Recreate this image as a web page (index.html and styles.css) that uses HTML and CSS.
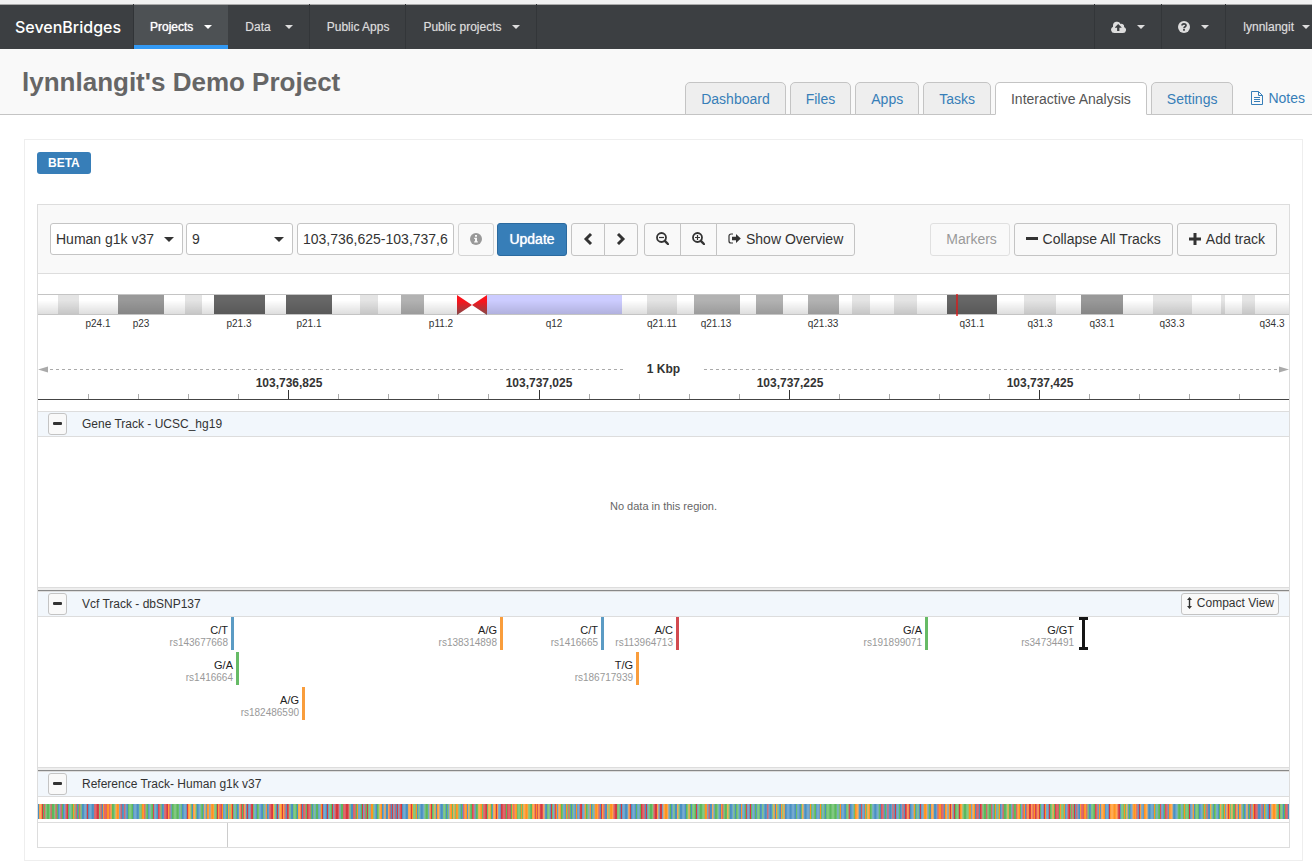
FILE: index.html
```html
<!DOCTYPE html>
<html lang="en">
<head>
<meta charset="utf-8">
<title>lynnlangit's Demo Project</title>
<link rel="stylesheet" href="styles.css">
</head>
<body>
<nav class="topbar">
  <a class="logo" href="#">SevenBridges</a>
  <a class="nav-item active" href="#">Projects<span class="caret"></span></a>
  <a class="nav-item data" href="#">Data<span class="caret"></span></a>
  <a class="nav-item" href="#">Public Apps</a>
  <a class="nav-item" href="#">Public projects<span class="caret"></span></a>
  <div class="nav-right">
    <a class="nav-item icon-item" href="#" aria-label="Upload">
      <svg width="15" height="12" viewBox="0 0 15 12"><path fill="currentColor" fill-rule="evenodd" d="M3.4 12A3.3 3.3 0 0 1 2 5.700V5a4 4 0 0 1 7.600-2A2.500 2.500 0 0 1 13 6a3.100 3.100 0 0 1-1 6zM7.200 3 4 6.300v.5h2.100V10h2.300V6.800h2.100v-.5z"/></svg>
      <span class="caret"></span></a>
    <a class="nav-item icon-item" href="#" aria-label="Help">
      <svg width="12" height="12" viewBox="0 0 12 12"><circle cx="6" cy="6" r="6" fill="currentColor"/><path d="M4 4.600C4 2.300 8 2.300 8 4.400 8 5.800 6 5.600 6 7.300" fill="none" stroke="#3c3f42" stroke-width="1.700"/><path fill="#3c3f42" d="M5.100 8h1.800v1.700H5.100z"/></svg>
      <span class="caret"></span></a>
    <a class="nav-item user" href="#">lynnlangit<span class="caret"></span></a>
  </div>
</nav>

<header class="project">
  <h1>lynnlangit's Demo Project</h1>
  <div class="tabs">
    <a class="tab" href="#">Dashboard</a>
    <a class="tab" href="#">Files</a>
    <a class="tab" href="#">Apps</a>
    <a class="tab" href="#">Tasks</a>
    <a class="tab current" href="#">Interactive Analysis</a>
    <a class="tab" href="#">Settings</a>
    <a class="notes" href="#"><svg width="12" height="14" viewBox="0 0 12 14" fill="none" stroke="currentColor"><path d="M.5.5h7l4 4v9H.5zM7.500.500v4h4M3 6.500h6M3 8.500h6M3 10.500h6"/></svg>Notes</a>
  </div>
</header>

<main class="page">
  <span class="badge">BETA</span>
  <section class="browser">
    <form class="toolbar">
      <span class="select genome"><select aria-label="Genome"><option>Human g1k v37</option></select></span>
      <span class="select chrom"><select aria-label="Chromosome"><option>9</option></select></span>
      <input class="range" type="text" aria-label="Region" value="103,736,625-103,737,625">
      <button class="btn info" type="button" aria-label="Info"><svg width="12" height="12" viewBox="0 0 12 12"><circle cx="6" cy="6" r="6" fill="#999"/><path fill="#f9f9f9" d="M5 2h2v1.700H5zM4.200 4.700H7v3.500h.8v1.300H4.200V8.200H5V6h-.8z"/></svg></button>
      <button class="btn primary" type="button">Update</button>
      <span class="group steps">
        <button class="btn" type="button" aria-label="Previous"><svg width="10" height="12" viewBox="0 0 10 12"><path d="M8 1 3 6l5 5" fill="none" stroke="#333" stroke-width="2.900"/></svg></button>
        <button class="btn" type="button" aria-label="Next"><svg width="10" height="12" viewBox="0 0 10 12"><path d="m2 1 5 5-5 5" fill="none" stroke="#333" stroke-width="2.900"/></svg></button>
      </span>
      <span class="group zoom">
        <button class="btn" type="button" aria-label="Zoom out"><svg width="13" height="13" viewBox="0 0 13 13" fill="none" stroke="#333"><circle cx="5.500" cy="5.500" r="4.500" stroke-width="1.800"/><path d="m8.800 8.800 3.200 3.200" stroke-width="2.400" stroke-linecap="round"/><path d="M3 5.500h5" stroke-width="1.200"/></svg></button>
        <button class="btn" type="button" aria-label="Zoom in"><svg width="13" height="13" viewBox="0 0 13 13" fill="none" stroke="#333"><circle cx="5.500" cy="5.500" r="4.500" stroke-width="1.800"/><path d="m8.800 8.800 3.200 3.200" stroke-width="2.400" stroke-linecap="round"/><path d="M3 5.500h5M5.500 3v5" stroke-width="1.200"/></svg></button>
        <button class="btn overview" type="button"><svg width="13" height="11" viewBox="0 0 13 11"><path d="M5 1H3a2 2 0 0 0-2 2v5a2 2 0 0 0 2 2h2" fill="none" stroke="#333" stroke-width="1.200"/><path fill="#333" d="M4 3.700h4V1l4.800 4.500L8 10V7.300H4z"/></svg>Show Overview</button>
      </span>
      <span class="actions">
        <button class="btn markers" type="button" disabled>Markers</button>
        <button class="btn" type="button"><svg width="12" height="12" viewBox="0 0 12 12"><path fill="#333" d="M0 4h12v3H0z"/></svg>Collapse All Tracks</button>
        <button class="btn" type="button"><svg width="12" height="12" viewBox="0 0 12 12"><path fill="#333" d="M4.500 0h3v4.500H12v3H7.500V12h-3V7.500H0v-3h4.500z"/></svg>Add track</button>
      </span>
    </form>

    <svg class="ideogram" id="ideogram" role="img" aria-label="Chromosome 9 bands">
      <defs>
        <linearGradient id="shade" x1="0" y1="0" x2="0" y2="1">
          <stop offset="0.300" stop-color="#000" stop-opacity="0"/>
          <stop offset="1" stop-color="#000" stop-opacity="0.140"/>
        </linearGradient>
        <linearGradient id="centromere" x1="0" y1="0" x2="0" y2="1">
          <stop offset="0.300" stop-color="#f9141c"/>
          <stop offset="1" stop-color="#804a4a"/>
        </linearGradient>
      </defs>
    </svg>
    <svg class="ruler" id="ruler" role="img" aria-label="Position ruler"></svg>

    <article class="track">
      <div class="track-head"><button class="toggle" type="button" aria-label="Collapse"></button><h2>Gene Track - UCSC_hg19</h2></div>
      <div class="track-body empty">No data in this region.</div>
      <div class="resize"></div>
    </article>
    <article class="track">
      <div class="track-head"><button class="toggle" type="button" aria-label="Collapse"></button><h2>Vcf Track - dbSNP137</h2>
        <button class="compact" type="button"><svg width="5" height="12" viewBox="0 0 5 12"><path d="M2.500 2v8" stroke="#333" stroke-width="1.400"/><path fill="#333" d="M0 3 2.500 0 5 3zM0 9l2.500 3L5 9z"/></svg>Compact View</button></div>
      <div class="track-body" id="variants"></div>
      <div class="resize"></div>
    </article>
    <article class="track">
      <div class="track-head"><button class="toggle" type="button" aria-label="Collapse"></button><h2>Reference Track- Human g1k v37</h2></div>
      <svg class="sequence" id="sequence" viewBox="0 0 1000 1" preserveAspectRatio="none"></svg>
    </article>
    <footer class="status"><div class="status-cell"></div></footer>
  </section>
</main>
<script src="app.js"></script>
</body>
</html>
```

FILE: styles.css
```css
* { box-sizing: border-box; }
body {
  margin: 0;
  background: #fff;
  color: #333;
  font: 14px/20px "Liberation Sans", Arial, sans-serif;
}
a { text-decoration: none; }
svg { display: block; flex: none; }
button, input, select { font: inherit; color: inherit; }

.topbar {
  display: flex;
  height: 49px;
  border-top: 4px solid #f1f1f1;
  background: #3c3f42;
  box-shadow: inset 0 1px #aaa;
  overflow: hidden;
}
.logo {
  display: flex;
  align-items: center;
  width: 134px;
  padding-left: 15px;
  border-right: 1px solid #313437;
  color: #fff;
  font: 500 16px/20px Inter, "Open Sans", sans-serif;
}
.nav-item {
  display: flex;
  align-items: center;
  padding: 1px 16px 0 17px;
  border-right: 1px solid #333639;
  color: #ddd;
  font-size: 12px;
  text-shadow: 0 0 1px #888;
}
.nav-item.active {
  margin-top: 1px;
  padding: 3px 16px 0;
  border-right: 0;
  border-bottom: 4px solid #3399f3;
  background: #4d5154;
  color: #fff;
  text-shadow: 0 0 1px #fff;
}
.caret {
  margin-left: 11px;
  border: 4px solid transparent;
  border-top-color: currentColor;
  border-bottom: 0;
}
.data .caret { margin-left: 14px; }
.nav-right { display: flex; margin-left: auto; border-left: 1px solid #333639; }
.nav-item.icon-item { padding-left: 16px; }
.nav-item.user { padding-right: 2px; border-right: 0; }
.user .caret { margin-left: 8px; }

.project {
  display: flex;
  justify-content: space-between;
  align-items: flex-end;
  height: 66px;
  padding: 0 7px 0 22px;
  border-bottom: 1px solid #c4c4c4;
  background: #f9f9f9;
}
h1 { margin: 0; padding-bottom: 17px; color: #666; font-size: 26px; line-height: 30px; }
.tabs { display: flex; gap: 4px; margin-bottom: -1px; }
.tab {
  height: 33px;
  padding: 6px 15px;
  border: 1px solid #c4c4c4;
  border-radius: 5px 5px 0 0;
  background: #eee;
  color: #377eb8;
}
.tab.current { border-bottom-color: #fff; background: #fff; color: #555; }
.notes { display: flex; gap: 5px; align-items: center; height: 32px; padding-left: 14px; color: #377eb8; }

.page {
  margin: 24px 9px 4px 24px;
  padding: 12px;
  border: 1px solid #eee;
}
.badge {
  display: block;
  width: fit-content;
  padding: 0 11px;
  border-radius: 3px;
  background: #377eb8;
  color: #fff;
  font-size: 12px;
  font-weight: bold;
  line-height: 22px;
}
.browser { margin-top: 30px; border: 1px solid #ddd; }
.toolbar {
  display: flex;
  align-items: flex-start;
  height: 69px;
  padding: 18px 12px 0;
  border-bottom: 1px solid #ddd;
  background: #f9f9f9;
}
.select { position: relative; height: 32px; }
.select::after {
  content: "";
  position: absolute;
  top: 14px;
  right: 9px;
  border: 5px solid transparent;
  border-top-color: #333;
  border-bottom: 0;
  pointer-events: none;
}
select, .range {
  width: 100%;
  height: 32px;
  padding: 0 5px;
  border: 1px solid #c4c4c4;
  border-radius: 3px;
  background: #fff;
  appearance: none;
}
.genome { width: 133px; margin-right: 3px; }
.chrom { width: 107px; margin-right: 4px; }
.range { width: 157px; margin-right: 4px; }
.btn {
  display: flex;
  align-items: center;
  justify-content: center;
  gap: 5px;
  height: 33px;
  padding: 0 11px 2px;
  border: 1px solid #c4c4c4;
  border-radius: 3px;
  background: #f9f9f9;
  white-space: nowrap;
}
.info { width: 36px; margin-right: 3px; border-color: #d4d4d4; }
.primary {
  width: 70px;
  margin-right: 4px;
  border-color: #2b6a9f;
  background: #377eb8;
  color: #fff;
  text-shadow: 0 0 1px #fff;
}
.group { display: flex; margin-right: 6px; }
.group .btn + .btn { margin-left: -1px; }
.group .btn:not(:first-child) { border-top-left-radius: 0; border-bottom-left-radius: 0; }
.group .btn:not(:last-child) { border-top-right-radius: 0; border-bottom-right-radius: 0; }
.steps .btn { width: 34px; }
.zoom .btn { width: 37px; }
.zoom .overview { width: auto; }
.actions { display: flex; gap: 4px; margin-left: auto; }
.markers { width: 80px; padding-left: 15px; border-color: #e0e0e0; color: #999; }

.ideogram { width: 100%; height: 38px; margin-top: 20px; overflow: visible; font-size: 10px; }
.ruler { width: 100%; height: 40px; margin: 30px 0 9px; font-size: 12px; font-weight: bold; }
.ideogram text, .ruler text { text-anchor: middle; fill: #333; }

.track-head {
  display: flex;
  align-items: center;
  height: 26px;
  padding: 0 10px;
  border: solid #ddd;
  border-width: 1px 0;
  background: #f2f7fc;
}
.toggle {
  display: grid;
  place-items: center;
  width: 19px;
  height: 22px;
  padding: 0 0 2px;
  border: 1px solid #c4c4c4;
  border-radius: 3px;
  background: #f9f9f9;
}
.toggle::before { content: ""; width: 9px; height: 3px; border-radius: 1px; background: #333; }
h2 { margin: 0 auto 0 15px; font-size: 12px; font-weight: normal; }
.compact {
  display: flex;
  align-items: center;
  gap: 5px;
  height: 22px;
  padding: 0 4px 2px 5px;
  border: 1px solid #c4c4c4;
  border-radius: 3px;
  background: #f9f9f9;
  font-size: 12px;
}
.track-body { height: 150px; }
.empty { display: grid; place-items: center; padding-bottom: 12px; color: #666; font-size: 11px; }
.resize { height: 4px; border-top: 1px solid #ddd; border-bottom: 1px solid #888; background: #eee; }

.variant-row { position: relative; height: 35px; }
.variant {
  position: absolute;
  top: 0;
  display: flex;
  flex-direction: column;
  height: 33px;
  padding: 7px 3px 0 0;
  border-right: 3px solid;
  text-align: right;
}
.variant b { color: #222; font-size: 11px; font-weight: normal; line-height: 13px; }
.variant i { color: #999; font-size: 10px; font-style: normal; line-height: 12px; }
.snp-blue { border-color: #5b9bc4; }
.snp-green { border-color: #66bb66; }
.snp-orange { border-color: #f99d3c; }
.snp-red { border-color: #d24a50; }
.indel { border-right: 0; padding-right: 14px; }
.indel svg { position: absolute; top: 0; right: 0; }

.sequence { width: 100%; height: 15px; margin: 7px 0 3px; }
.status { display: flex; height: 25px; border-top: 1px solid #ddd; }
.status-cell { width: 190px; border-right: 1px solid #ccc; }
```

FILE: app.js
```js
const NS = "http://www.w3.org/2000/svg";
const SPAN = 1251;
const pct = x => (x / SPAN * 100).toFixed(3) + "%";

function add(parent, name, attrs, text) {
  const el = document.createElementNS(NS, name);
  for (const key in attrs) el.setAttribute(key, attrs[key]);
  if (text) el.textContent = text;
  parent.appendChild(el);
  return el;
}

/* Chromosome bands: start, end, stain colour */
const bands = [
  [20, 41, "#e4e4e4"], [80, 126, "#999"], [147, 164, "#e4e4e4"], [176, 227, "#666"],
  [248, 294, "#666"], [322, 340, "#e4e4e4"], [363, 386, "#b2b2b2"], [449, 584, "#ccccff"],
  [609, 639, "#e4e4e4"], [656, 702, "#b2b2b2"], [718, 745, "#b2b2b2"], [770, 801, "#b2b2b2"],
  [814, 832, "#e4e4e4"], [856, 879, "#e4e4e4"], [909, 959, "#666"], [986, 1018, "#e4e4e4"],
  [1043, 1085, "#999"], [1115, 1154, "#e4e4e4"], [1183, 1187, "#e4e4e4"], [1204, 1217, "#e4e4e4"]
];
const bandLabels = [
  [60, "p24.1"], [103, "p23"], [201, "p21.3"], [271, "p21.1"], [403, "p11.2"], [516, "q12"],
  [624, "q21.11"], [678, "q21.13"], [785, "q21.33"], [934, "q31.1"], [1002, "q31.3"],
  [1064, "q33.1"], [1134, "q33.3"], [1234, "q34.3"]
];
const ideogram = document.getElementById("ideogram");
bands.forEach(([a, b, fill]) =>
  add(ideogram, "rect", { x: pct(a), y: 0, width: pct(b - a), height: 21, fill }));
add(ideogram, "rect", { x: 0, y: 0, width: "100%", height: 21, fill: "url(#shade)" });
add(ideogram, "rect", { x: 0, y: 0, width: "100%", height: 1, fill: "#c4c4c4" });
add(ideogram, "rect", { x: 0, y: 20, width: "100%", height: 1, fill: "#c4c4c4" });
const cen = add(ideogram, "svg", { x: pct(419), y: 0, width: pct(30), height: 21, viewBox: "0 0 30 21", preserveAspectRatio: "none" });
add(cen, "path", { d: "M0 1h30v19H0z", fill: "#fff" });
add(cen, "path", { d: "M0 1 15 11 30 1v20L15 11 0 21z", fill: "url(#centromere)" });
add(ideogram, "rect", { x: pct(918), y: 0, width: 2, height: 22, fill: "#e01818", "fill-opacity": 0.7 });
bandLabels.forEach(([x, name]) => add(ideogram, "text", { x: pct(x), y: 33 }, name));

/* Ruler */
const ruler = document.getElementById("ruler");
const dash = { stroke: "#aaa", "stroke-dasharray": "3 3" };
add(ruler, "line", { x1: 12, x2: pct(585), y1: 7.5, y2: 7.5, ...dash });
add(ruler, "line", { x1: pct(666), x2: pct(1240), y1: 7.5, y2: 7.5, ...dash });
add(ruler, "path", { d: "M0 7.5 10 4.5v6z", fill: "#aaa" });
const tip = add(ruler, "svg", { x: "100%", y: 0, overflow: "visible", width: 1, height: 16 });
add(tip, "path", { d: "M0 7.5-10 4.5v6z", fill: "#aaa" });
add(ruler, "text", { x: "50%", y: 11 }, "1 Kbp");
for (let k = 1; k < 25; k++) {
  const major = k % 5 === 0;
  add(ruler, "rect", { x: pct(Math.round(k * 50.05)), y: major ? 28 : 32, width: 1, height: major ? 9 : 5,
    fill: major ? "#333" : "#aaa", "shape-rendering": "crispEdges" });
}
add(ruler, "rect", { x: 0, y: 37, width: "100%", height: 1, fill: "#444" });
[[251, "103,736,825"], [501, "103,737,025"], [752, "103,737,225"], [1002, "103,737,425"]]
  .forEach(([x, label]) => add(ruler, "text", { x: pct(x), y: 25 }, label));

/* Variants: right edge of the bar, colour, alleles, id */
const variants = [
  [[196, "snp-blue", "C/T", "rs143677668"], [465, "snp-orange", "A/G", "rs138314898"],
   [566, "snp-blue", "C/T", "rs1416665"], [641, "snp-red", "A/C", "rs113964713"],
   [890, "snp-green", "G/A", "rs191899071"], [1050, "indel", "G/GT", "rs34734491"]],
  [[201, "snp-green", "G/A", "rs1416664"], [601, "snp-orange", "T/G", "rs186717939"]],
  [[267, "snp-orange", "A/G", "rs182486590"]]
];
const host = document.getElementById("variants");
variants.forEach(items => {
  const row = document.createElement("div");
  row.className = "variant-row";
  items.forEach(([edge, kind, alleles, id]) => {
    const el = document.createElement("div");
    el.className = "variant " + kind;
    el.style.right = pct(SPAN - edge);
    el.innerHTML = `<b>${alleles}</b><i>${id}</i>`;
    if (kind === "indel") {
      const mark = add(el, "svg", { width: 9, height: 33 });
      add(mark, "path", { d: "M0 0h9v3H6v27h3v3H0v-3h3V3H0z", fill: "#151515" });
    }
    row.appendChild(el);
  });
  host.appendChild(row);
});

/* Reference bases: each stretch has its own composition (blue, green, orange, red) */
const colours = ["#4a90c2", "#5cb85c", "#ff9320", "#d6393f"];
const stretches = [
  [3, 3, 2, 2], [4, 3, 2, 2], [3, 3, 2, 2], [4, 2, 2, 3], [4, 4, 1, 2], [4, 2, 2, 3], [4, 2, 3, 1],
  [1, 3, 4, 3], [3, 2, 3, 2], [3, 3, 2, 3], [2, 3, 3, 2], [5, 4, 1, 1], [5, 4, 1, 1], [4, 3, 1, 2],
  [4, 2, 4, 2], [2, 3, 2, 4], [4, 3, 2, 3], [3, 3, 3, 3], [4, 4, 2, 1], [3, 3, 3, 2]
];
const sequence = document.getElementById("sequence");
let seed = 103736625, last = 0;
const random = () => (seed = (seed * 48271) % 2147483647) / 2147483647;
for (let i = 0; i < 1000; i++) {
  const weights = stretches[Math.floor(i / 50)];
  if (random() > 0.15) {
    let pick = random() * weights.reduce((a, b) => a + b);
    last = weights.findIndex(w => (pick -= w) < 0);
  }
  add(sequence, "rect", { x: i, y: 0, width: 1, height: 1, fill: colours[last] });
}
```
